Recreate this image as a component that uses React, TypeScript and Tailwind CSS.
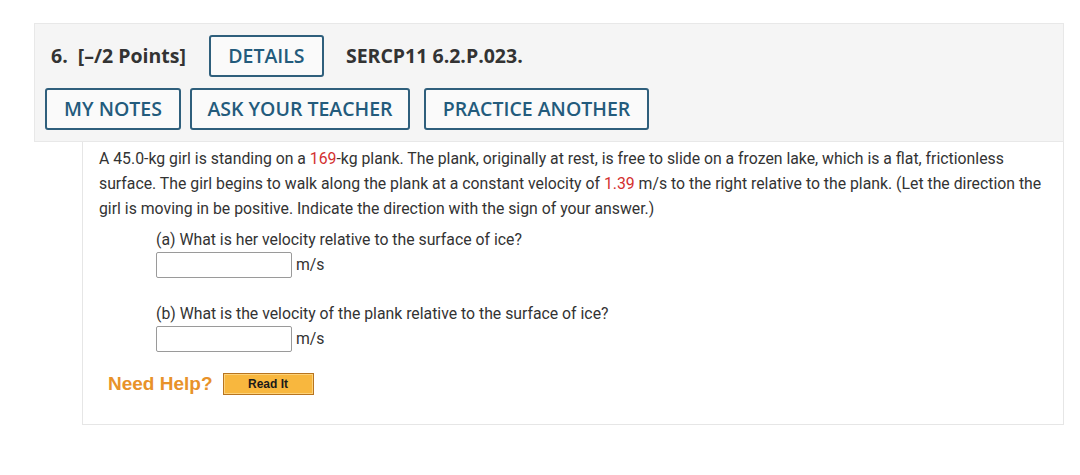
import React from "react";

function OutlineButton({ children, className = "" }: { children: React.ReactNode; className?: string }) {
  return (
    <button
      className={
        "h-[42px] rounded-[3px] border-2 border-[#2f5f7c] bg-[#fafafa] text-[19.5px] font-semibold text-[#235b7c] " +
        className
      }
    >
      {children}
    </button>
  );
}

function Answer() {
  return (
    <div className="flex items-center gap-[4px]">
      <div className="h-[26px] w-[136px] rounded-[2px] border border-[#9a9a9a] bg-white" />
      <span className="text-[15.8px] text-[#333]">m/s</span>
    </div>
  );
}

export default function App() {
  return (
    <div className="min-h-[475px] bg-white pt-[23px] pl-[34px]" style={{ fontFamily: "Roboto, sans-serif" }}>
      <div className="w-[1030px]">
        <div
          className="border border-[#e8e8e8] bg-[#f5f5f5] px-[10px] pt-[11px] pb-[11px]"
          style={{ fontFamily: "'Open Sans', sans-serif" }}
        >
          <div className="flex items-center">
            <span className="pl-[6px] text-[19.5px] font-bold text-[#333]">6.</span>
            <span className="pl-[10px] text-[19.5px] font-bold text-[#333]">[–/2 Points]</span>
            <OutlineButton className="ml-[23px] w-[115px]">DETAILS</OutlineButton>
            <span className="ml-[22px] text-[19.5px] font-bold text-[#333]">SERCP11 6.2.P.023.</span>
          </div>
          <div className="mt-[11px] flex items-center">
            <OutlineButton className="w-[136px]">MY NOTES</OutlineButton>
            <OutlineButton className="ml-[9px] w-[220px]">ASK YOUR TEACHER</OutlineButton>
            <OutlineButton className="ml-[14px] w-[225px]">PRACTICE ANOTHER</OutlineButton>
          </div>
        </div>
        <div className="ml-[48px] h-[283px] border-x border-b border-[#e6e6e6] pl-[16px] pr-[15px] pt-[4px]">
          <p className="text-[15.8px] leading-[25px] text-[#333]">
            A 45.0-kg girl is standing on a <span className="text-[#d32f2f]">169</span>-kg plank. The plank, originally at
            rest, is free to slide on a frozen lake, which is a flat, frictionless surface. The girl begins to walk along
            the plank at a constant velocity of <span className="text-[#d32f2f]">1.39</span> m/s to the right relative to
            the plank. (Let the direction the girl is moving in be positive. Indicate the direction with the sign of your
            answer.)
          </p>
          <div className="pl-[57px]">
            <div className="mt-[8px] text-[15.8px] leading-[22px] text-[#333]">(a) What is her velocity relative to the surface of ice?</div>
            <div className="mt-[1px]">
              <Answer />
            </div>
            <div className="mt-[25px] text-[15.8px] leading-[22px] text-[#333]">(b) What is the velocity of the plank relative to the surface of ice?</div>
            <div className="mt-[1px]">
              <Answer />
            </div>
          </div>
          <div className="mt-[18px] flex items-center pl-[9px]">
            <span className="text-[19px] font-bold text-[#e8922a]" style={{ fontFamily: "'Liberation Sans', Arial, sans-serif" }}>
              Need Help?
            </span>
            <button
              className="ml-[10px] h-[22px] w-[91px] border border-[#b8741f] bg-[#f8b73e] text-[12px] font-bold text-[#1a1a1a] shadow-[inset_0_0_0_1px_#fcd27a]"
              style={{ fontFamily: "'Liberation Sans', Arial, sans-serif" }}
            >
              Read It
            </button>
          </div>
        </div>
      </div>
    </div>
  );
}
